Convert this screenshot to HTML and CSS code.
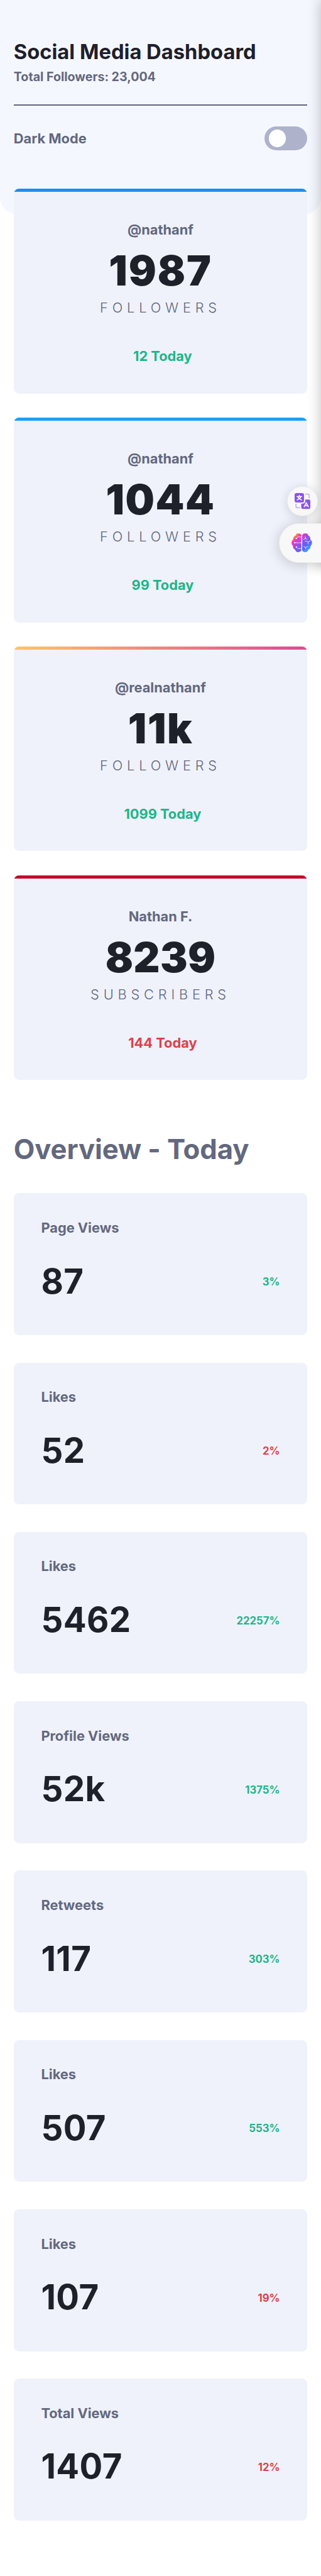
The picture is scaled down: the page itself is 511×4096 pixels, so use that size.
FILE: index.html
```
<!DOCTYPE html>
<html lang="en">
<head>
<meta charset="utf-8">
<title>Social Media Dashboard</title>
<link rel="stylesheet" href="styles.css">
</head>
<body>
<div class="page">
  <header class="header">
    <h1 class="title">Social Media Dashboard</h1>
    <p class="total">Total Followers: 23,004</p>
    <div class="mode">
      <span class="mode-label">Dark Mode</span>
      <span class="toggle"><span class="knob"></span></span>
    </div>
  </header>
  <main class="main">
    <section class="accounts">
      <article class="account facebook">
        <p class="handle">@nathanf</p>
        <p class="count">1987</p>
        <p class="unit">Followers</p>
        <p class="change up">12 Today</p>
      </article>
      <article class="account twitter">
        <p class="handle">@nathanf</p>
        <p class="count">1044</p>
        <p class="unit">Followers</p>
        <p class="change up">99 Today</p>
      </article>
      <article class="account instagram">
        <p class="handle">@realnathanf</p>
        <p class="count">11k</p>
        <p class="unit">Followers</p>
        <p class="change up">1099 Today</p>
      </article>
      <article class="account youtube">
        <p class="handle">Nathan F.</p>
        <p class="count">8239</p>
        <p class="unit">Subscribers</p>
        <p class="change down">144 Today</p>
      </article>
    </section>
    <h2 class="overview-title">Overview - Today</h2>
    <section class="overview">
      <article class="stat"><h3 class="stat-label">Page Views</h3><div class="stat-row"><span class="stat-value">87</span><span class="percent up">3%</span></div></article>
      <article class="stat"><h3 class="stat-label">Likes</h3><div class="stat-row"><span class="stat-value">52</span><span class="percent down">2%</span></div></article>
      <article class="stat"><h3 class="stat-label">Likes</h3><div class="stat-row"><span class="stat-value">5462</span><span class="percent up">22257%</span></div></article>
      <article class="stat"><h3 class="stat-label">Profile Views</h3><div class="stat-row"><span class="stat-value">52k</span><span class="percent up">1375%</span></div></article>
      <article class="stat"><h3 class="stat-label">Retweets</h3><div class="stat-row"><span class="stat-value">117</span><span class="percent up">303%</span></div></article>
      <article class="stat"><h3 class="stat-label">Likes</h3><div class="stat-row"><span class="stat-value">507</span><span class="percent up">553%</span></div></article>
      <article class="stat"><h3 class="stat-label">Likes</h3><div class="stat-row"><span class="stat-value">107</span><span class="percent down">19%</span></div></article>
      <article class="stat"><h3 class="stat-label">Total Views</h3><div class="stat-row"><span class="stat-value">1407</span><span class="percent down">12%</span></div></article>
    </section>
  </main>
  <div class="side-shadow"></div>
  <div class="float translate">
    <svg class="translate-icon" viewBox="0 0 37 37">
      <g fill="none" stroke="#cdb8f3" stroke-width="3">
        <path d="M25 2.6h5.500q3.500 0 3.500 3.500v6"/>
        <path d="M3.200 25v6q0 3.200 3.500 3.200h6"/>
      </g>
      <path fill="#8b55e8" d="M25 15.200h8q4 0 4 4V33q0 4-4 4H19.500q-4 0-4-4v-8.500h3.500q6 0 6-6v-3.300z"/>
      <rect width="22" height="22" rx="4.500" fill="#8b55e8"/>
      <g fill="none" stroke="#fff" stroke-width="2.200" stroke-linecap="round" stroke-linejoin="round">
        <path d="M11 5v2.500M5.500 8.200h11M14.500 8.500Q12 14 6 16M7.500 8.500Q10 14 16 16"/>
        <path d="M22.500 32l4.800-9.500 4.800 9.500M24.500 29.500h5.500"/>
      </g>
    </svg>
  </div>
  <div class="float brain">
    <svg class="brain-icon" viewBox="0 0 48 44">
      <defs>
        <linearGradient id="brainFill" x1="0" y1="0" x2="1" y2="1">
          <stop offset=".12" stop-color="#ffa321"/>
          <stop offset=".28" stop-color="#f233c8"/>
          <stop offset=".52" stop-color="#8157ec"/>
          <stop offset=".7" stop-color="#5b63f6"/>
          <stop offset=".88" stop-color="#2fb4ff"/>
        </linearGradient>
      </defs>
      <path fill="url(#brainFill)" d="M23 4Q21 0 16 0Q11 0 9.500 5Q3.500 7 4 14Q0 17 0 22Q0 27 3.500 29Q3 36 8.500 38Q10 44 16 44Q21 44 23 40zM25 4Q27 0 32.500 0Q38 0 39.500 5Q45 8 44 15Q48 17 48 22Q48 27 44.500 30Q45 36 39.500 38Q38 44 32 44Q27 44 25 40z"/>
      <g fill="none" stroke="#fff" stroke-opacity=".9" stroke-width="1.300" stroke-linecap="round">
        <path d="M23 8.500h-8l-3.500 3.500M23 22H8M23 35.500h-8l-3.500-3.500M32.500 8v4l-4 2M32.500 12l4 2M32 18.500q7 3 12-.5M39 21v4M29 31l4 2 5-2.500M33 33v3"/>
      </g>
      <g fill="#fff"><circle cx="11.500" cy="12" r="1.600"/><circle cx="7.500" cy="22" r="1.600"/><circle cx="11.500" cy="32" r="1.600"/></g>
    </svg>
  </div>
</div>
</body>
</html>
```
FILE: styles.css
```
/* 1rem is 20 design pixels */
html { font-size: 13.63px; }
* { box-sizing: border-box; margin: 0; }
body { background: #fff; font-family: Inter, "Liberation Sans", sans-serif; color: #1e202a; font-weight: 700; }
.page { position: relative; overflow: hidden; height: 4096px; padding: 0 1.6rem; }
.header { margin: 0 -1.6rem; height: 25rem; padding: 4.6rem 1.6rem 0; background: #f5f7ff; border-radius: 0 0 2rem 2rem; }
.title { font-size: 2.4rem; line-height: 2.9rem; }
.total { font-size: 1.44rem; line-height: 1.7rem; margin-top: .65rem; color: #63687e; }
.mode { display: flex; align-items: center; justify-content: space-between; margin-top: 2.35rem; border-top: .2rem solid #63687e; padding-top: 2.4rem; }
.mode-label { font-size: 1.6rem; line-height: 2rem; padding-top: .06rem; color: #63687e; }
.toggle { display: flex; align-items: center; width: 5rem; height: 2.8rem; padding: 0 .5rem; border-radius: 1.4rem; background: #aeb3cb; }
.knob { width: 2rem; height: 2rem; border-radius: 50%; background: #fff; }
.main { margin-top: -3rem; }
.accounts { display: flex; flex-direction: column; gap: 2.8rem; }
.account { position: relative; overflow: hidden; height: 23.9rem; border-radius: .6rem; background: #eff2fa; text-align: center; padding-top: 3.84rem; }
.account::before { content: ""; position: absolute; inset: 0 0 auto; height: .4rem; background: #198ff5; }
.twitter::before { background: #1da1f2; }
.instagram::before { background: linear-gradient(90deg, #fdc468, #df4996); }
.youtube::before { background: #c4032a; }
.handle { font-size: 1.6rem; line-height: 2rem; color: #63687e; }
.count { font-size: 4.8rem; font-weight: 900; line-height: 4.8rem; margin-top: 1.35rem; letter-spacing: .02rem; }
.facebook .count { letter-spacing: .14rem; }
.twitter .count, .instagram .count { letter-spacing: .11rem; }
.unit { font-size: 1.6rem; font-weight: 300; line-height: 2rem; letter-spacing: .5rem; text-transform: uppercase; color: #63687e; margin-top: .95rem; }
.change { font-size: 1.6rem; line-height: 2rem; margin-top: 3.62rem; padding-left: .5rem; }
.up { color: #1eb589; }
.down { color: #dc414c; }
.overview-title { font-size: 3.2rem; line-height: 4rem; letter-spacing: -.005rem; color: #63687e; margin-top: 6.17rem; }
.overview { display: flex; flex-direction: column; gap: 3.2rem; margin-top: 3.03rem; }
.stat { height: 16.557rem; padding: 3.05rem 3.2rem 0; border-radius: .6rem; background: #eff2fa; }
.stat-label { font-size: 1.6rem; line-height: 2rem; color: #63687e; }
.stat-row { display: flex; align-items: center; justify-content: space-between; margin-top: 2.82rem; height: 4.8rem; }
.stat-value { font-size: 4rem; line-height: 4.8rem; letter-spacing: .03rem; }
.percent { font-size: 1.23rem; line-height: 1.6rem; padding-top: .25rem; }
.side-shadow { position: absolute; left: 100%; top: 0; width: 5rem; height: 66rem; box-shadow: 0 0 1.6rem rgba(0,0,0,.25); }
.float { position: absolute; display: flex; align-items: center; background: #f8f8f8; border: .1rem solid #ebebef; }
.translate { left: 33.55rem; top: 56.7rem; width: 3.55rem; height: 3.55rem; justify-content: center; border-radius: 50%; box-shadow: 0 .2rem 1.2rem rgba(0,0,0,.14); }
.translate-icon { width: 1.85rem; height: 1.85rem; }
.brain { left: 32.6rem; top: 61.05rem; width: 6rem; height: 4.6rem; padding-left: 1.4rem; border-radius: 2.3rem 0 0 2.3rem; box-shadow: 0 .2rem 1.6rem rgba(0,0,0,.2); }
.brain-icon { width: 2.4rem; height: 2.2rem; }
```
